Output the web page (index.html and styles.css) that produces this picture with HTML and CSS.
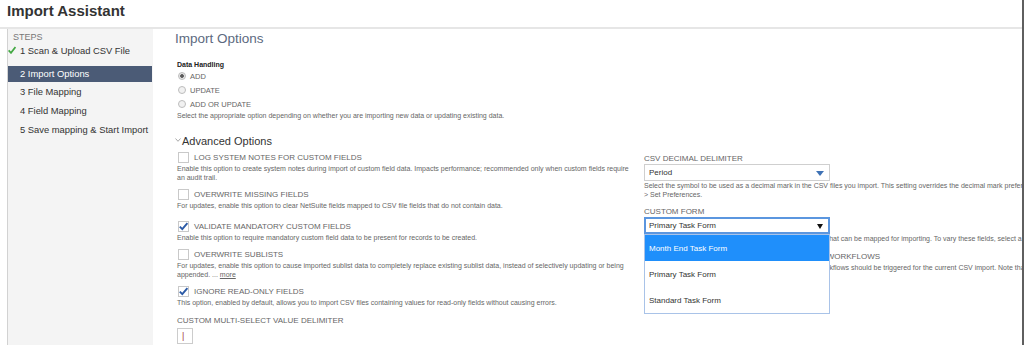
FILE: index.html
```html
<!DOCTYPE html>
<html lang="en">
<head>
<meta charset="utf-8">
<title>Import Assistant</title>
<link rel="stylesheet" href="styles.css">
</head>
<body>
<div class="page">
  <header class="titlebar">
    <h1 class="title">Import Assistant</h1>
  </header>
  <div class="layout">
    <nav class="steps">
      <div class="steps-title">STEPS</div>
      <div class="step-done">
        <svg class="done-check" width="8" height="8" viewBox="0 0 8 8"><path d="M0.6 4.4 L3 6.8 L7.5 1" fill="none" stroke="#43a843" stroke-width="1.8"/></svg>
        <span>1 Scan &amp; Upload CSV File</span>
      </div>
      <div class="step step-active">2 Import Options</div>
      <div class="step">3 File Mapping</div>
      <div class="step">4 Field Mapping</div>
      <div class="step">5 Save mapping &amp; Start Import</div>
    </nav>
    <main class="content">
      <h2 class="page-heading">Import Options</h2>
      <section class="data-handling">
        <div class="group-label">Data Handling</div>
        <div class="radio-row"><span class="radio radio-on"></span>ADD</div>
        <div class="radio-row"><span class="radio"></span>UPDATE</div>
        <div class="radio-row"><span class="radio"></span>ADD OR UPDATE</div>
        <p class="hint">Select the appropriate option depending on whether you are importing new data or updating existing data.</p>
      </section>
      <section class="advanced">
        <h3 class="section-heading"><svg class="caret" width="6" height="4" viewBox="0 0 6 4"><path d="M0.5 0.5 L3 3.3 L5.5 0.5" fill="none" stroke="#a8a8a8" stroke-width="1"/></svg>Advanced Options</h3>
        <div class="cols">
          <div class="col">
            <div class="field">
              <div class="cb-row"><span class="checkbox"></span>LOG SYSTEM NOTES FOR CUSTOM FIELDS</div>
              <p class="hint">Enable this option to create system notes during import of custom field data. Impacts performance; recommended only when custom fields require an audit trail.</p>
            </div>
            <div class="field field-spaced">
              <div class="cb-row"><span class="checkbox"></span>OVERWRITE MISSING FIELDS</div>
              <p class="hint">For updates, enable this option to clear NetSuite fields mapped to CSV file fields that do not contain data.</p>
            </div>
            <div class="field">
              <div class="cb-row"><span class="checkbox"><svg class="tick" width="11" height="11" viewBox="0 0 11 11"><path d="M1.8 5.6 L4.3 8.2 L9.4 2.2" fill="none" stroke="#2b5aa6" stroke-width="1.9"/></svg></span>VALIDATE MANDATORY CUSTOM FIELDS</div>
              <p class="hint">Enable this option to require mandatory custom field data to be present for records to be created.</p>
            </div>
            <div class="field">
              <div class="cb-row"><span class="checkbox"></span>OVERWRITE SUBLISTS</div>
              <p class="hint">For updates, enable this option to cause imported sublist data to completely replace existing sublist data, instead of selectively updating or being appended. ... <a class="more" href="#">more</a></p>
            </div>
            <div class="field field-last">
              <div class="cb-row"><span class="checkbox"><svg class="tick" width="11" height="11" viewBox="0 0 11 11"><path d="M1.8 5.6 L4.3 8.2 L9.4 2.2" fill="none" stroke="#2b5aa6" stroke-width="1.9"/></svg></span>IGNORE READ-ONLY FIELDS</div>
              <p class="hint">This option, enabled by default, allows you to import CSV files containing values for read-only fields without causing errors.</p>
            </div>
            <div class="r-label">CUSTOM MULTI-SELECT VALUE DELIMITER</div>
            <div class="text-input">|</div>
            <p class="hint">Enter a single character to be used as the delimiter for values of multi-select fields in your CSV file.</p>
          </div>
          <div class="col col-right">
            <div class="r-field">
              <div class="r-label">CSV DECIMAL DELIMITER</div>
              <div class="select">Period<svg class="select-arrow" width="8" height="5" viewBox="0 0 8 5"><path d="M0 0 H8 L4 5 Z" fill="#3f72b5"/></svg></div>
              <p class="hint">Select the symbol to be used as a decimal mark in the CSV files you import. This setting overrides the decimal mark preference set at Home <span class="nowrap">&gt; Set Preferences.</span></p>
            </div>
            <div class="r-field">
              <div class="r-label">CUSTOM FORM</div>
              <div class="select-wrap">
                <div class="select select-focus">Primary Task Form<svg class="select-arrow" width="6" height="5" viewBox="0 0 6 5"><path d="M0 0 H6 L3 5 Z" fill="#111"/></svg></div>
                <ul class="dropdown">
                  <li class="dd-item dd-item-active">Month End Task Form</li>
                  <li class="dd-item">Primary Task Form</li>
                  <li class="dd-item">Standard Task Form</li>
                </ul>
              </div>
              <p class="hint">Select a custom form for an import. It determines the fields that can be mapped for importing. To vary these fields, select a different form.</p>
            </div>
            <div class="r-field r-field-check">
              <div class="cb-row"><span class="checkbox"></span>RUN SERVER SUITESCRIPT AND TRIGGER WORKFLOWS</div>
              <p class="hint">Select this option to indicate if all server SuiteScript and workflows should be triggered for the current CSV import. Note that this may slow the import.</p>
            </div>
          </div>
        </div>
      </section>
    </main>
  </div>
</div>
</body>
</html>
```

FILE: styles.css
```css
* { box-sizing: border-box; }

body {
  margin: 0;
  font-family: "Liberation Sans", Arial, sans-serif;
  background: #fff;
  color: #333;
}

p { margin: 0; }

.page {
  width: 1024px;
  height: 345px;
  border-right: 2px solid #5f5f5f;
  overflow: hidden;
}

.titlebar {
  height: 29px;
  border-bottom: 2px solid #e6e6e6;
}

.title {
  margin: 0;
  padding: 2px 0 0 7px;
  font-size: 15px;
  line-height: 18px;
  font-weight: bold;
  color: #333;
}

.layout {
  display: flex;
  height: 316px;
}

/* steps panel */
.steps {
  flex: none;
  width: 146px;
  margin-left: 7px;
  border-left: 1px solid #d2d2d2;
  background: #f4f4f4;
}

.steps-title {
  height: 13px;
  padding: 3px 0 0 5px;
  font-size: 9px;
  line-height: 10px;
  color: #777;
}

.step-done {
  display: flex;
  align-items: center;
  gap: 4px;
  height: 16px;
  margin-bottom: 8px;
  font-size: 9.4px;
  color: #333;
}

.done-check { display: block; flex: none; }

.step {
  height: 16px;
  line-height: 16px;
  padding-left: 12px;
  margin-bottom: 3px;
  font-size: 9.4px;
  color: #333;
  white-space: nowrap;
}

.step-active {
  margin-right: 1px;
  margin-bottom: 2px;
  background: #4b5b76;
  color: #fff;
}

/* main content */
.content {
  flex: 1;
  min-width: 0;
  padding-left: 22px;
}

.page-heading {
  margin: 2px 0 0;
  font-size: 13.5px;
  line-height: 16px;
  font-weight: normal;
  color: #5c6a80;
}

.data-handling { padding-left: 2px; }

.group-label {
  margin-top: 13px;
  font-size: 7px;
  line-height: 9px;
  font-weight: bold;
  color: #222;
}

.radio-row {
  display: flex;
  align-items: center;
  gap: 4px;
  height: 14px;
  padding-left: 1px;
  font-size: 7.5px;
  color: #666;
}

.radio {
  flex: none;
  width: 8px;
  height: 8px;
  border-radius: 50%;
  border: 1px solid #bdbdbd;
  background: #f1f1f1;
}

.radio-on {
  background: radial-gradient(circle, #5a5a5a 0, #5a5a5a 1.5px, #e6e6e6 2.2px);
}

.hint {
  font-size: 7px;
  line-height: 9px;
  color: #666;
}

.section-heading {
  display: flex;
  align-items: center;
  margin: 14px 0 0;
  font-size: 11px;
  line-height: 14px;
  font-weight: normal;
  color: #333;
}

.caret {
  display: block;
  flex: none;
  align-self: flex-start;
  margin: 4px 1px 0 0;
}

.cols {
  display: flex;
  gap: 11px;
  margin-top: 3px;
  padding-left: 2px;
}

.col {
  flex: none;
  width: 456px;
}

.field { margin-bottom: 6px; }
.field-spaced { margin-bottom: 10px; }
.field-last { margin-bottom: 9px; }

.cb-row {
  display: flex;
  align-items: center;
  gap: 5px;
  height: 13px;
  padding-left: 1px;
  font-size: 8px;
  color: #666;
  white-space: nowrap;
}

.checkbox {
  position: relative;
  flex: none;
  width: 11px;
  height: 11px;
  border: 1px solid #c9c9c9;
  background: #fff;
}

.tick {
  position: absolute;
  left: -1px;
  top: -1px;
  overflow: visible;
}

.more {
  color: #666;
  text-decoration: underline;
}

.r-label {
  font-size: 8px;
  line-height: 10px;
  color: #666;
  white-space: nowrap;
}

.text-input {
  width: 16px;
  height: 16px;
  margin-top: 2px;
  border: 1px solid #cccccc;
  padding-left: 4px;
  font-size: 9px;
  line-height: 14px;
  color: #a04040;
}

.col-right { padding-top: 3px; }

.r-field + .r-field { margin-top: 8px; }
.r-field + .r-field-check { margin-top: 7px; }

.r-field-check .cb-row { padding-left: 0; }

.select {
  position: relative;
  display: flex;
  align-items: center;
  width: 186px;
  height: 17px;
  padding-left: 4px;
  border: 1px solid #cfcfcf;
  background: #fff;
  font-size: 8px;
  color: #333;
}

.select-focus {
  border: 2px solid #5b96df;
  padding-left: 3px;
}

.select-arrow {
  position: absolute;
  right: 5px;
  top: 50%;
  margin-top: -2px;
}

.select-wrap { position: relative; }

.dropdown {
  position: absolute;
  top: 100%;
  left: 0;
  z-index: 2;
  width: 186px;
  margin: 0;
  padding: 0;
  list-style: none;
  border: 1px solid #a9c3e8;
  background: #fff;
}

.dd-item {
  display: flex;
  align-items: center;
  height: 26px;
  padding-left: 4px;
  font-size: 8px;
  color: #333;
}

.dd-item-active {
  background: #1f8ffb;
  color: #fff;
}

.nowrap { white-space: nowrap; }
```
